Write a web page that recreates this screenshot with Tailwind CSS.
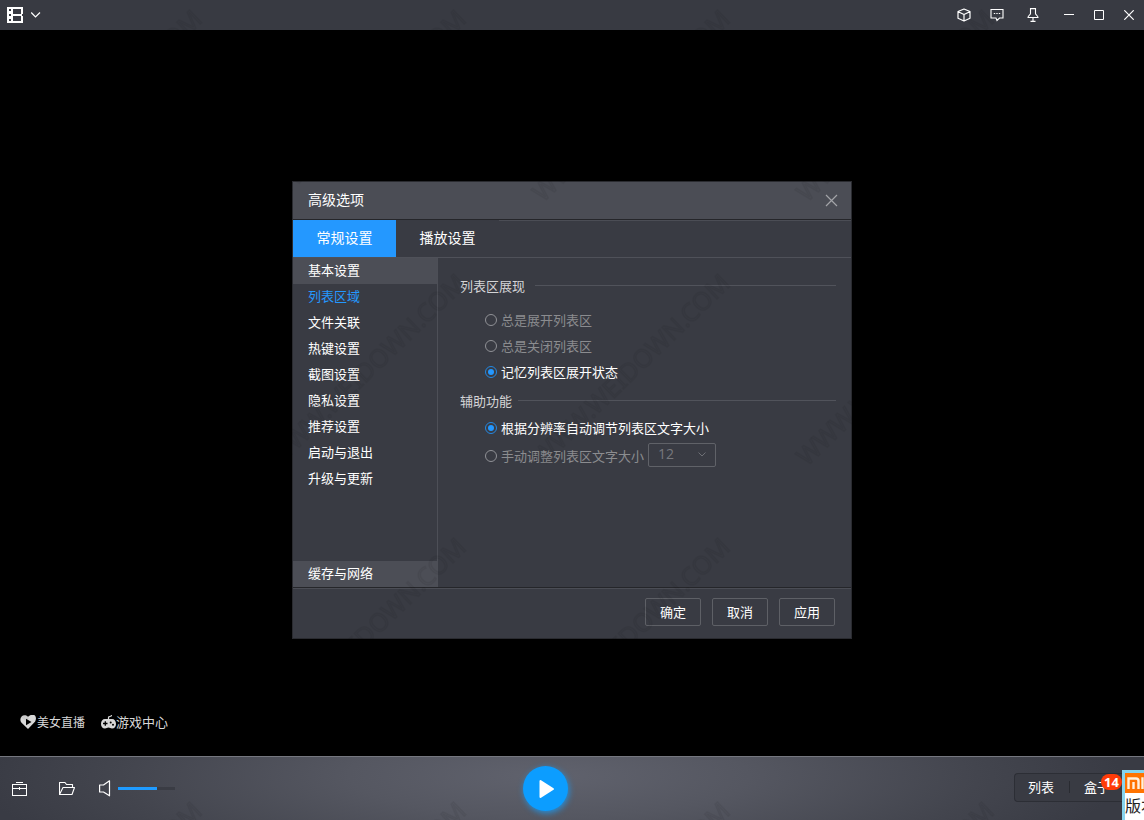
<!DOCTYPE html>
<html lang="zh-CN">
<head>
<meta charset="utf-8">
<meta name="viewport" content="width=device-width, initial-scale=1">
<title>高级选项</title>
<script src="https://cdn.jsdelivr.net/npm/@tailwindcss/browser@4"></script>
</head>
<body class="relative flex h-screen flex-col overflow-hidden bg-black font-['Noto_Sans_CJK_SC',sans-serif] text-[13px] text-white">

<!-- Title bar -->
<header class="flex h-[30px] shrink-0 items-center justify-between bg-[#383a42]">
  <button class="flex items-center gap-2 pl-[7px]" aria-label="主菜单">
    <svg width="16" height="16" viewBox="0 0 16 16" shape-rendering="crispEdges"><path fill="#fff" fill-rule="evenodd" d="M0 0H16V16H0ZM2 2V4H4V2ZM2 7V9H4V7ZM2 12V14H4V12ZM6 2V7H14V2ZM6 9V14H14V9Z"/><path fill="#383a42" d="M15 7h1v2h-1z"/></svg>
    <svg width="10" height="6" viewBox="0 0 10 6" fill="none" stroke="#fff" stroke-width="1.200"><path d="M.2 .5 4.500 5 9 .5"/></svg>
  </button>
  <div class="flex h-full items-center">
    <button class="flex w-[33px] justify-center" aria-label="皮肤"><svg width="14" height="14" viewBox="0 0 14 14" fill="none" stroke="#fff" stroke-width="1.200" stroke-linejoin="round"><path d="M7 1 13 3.500V10.200L7 13 1 10.200V3.500ZM1.200 3.800 7 6.500 12.800 3.800M7 6.500V13"/></svg></button>
    <button class="flex w-[34px] justify-center" aria-label="反馈"><svg width="14" height="14" viewBox="0 0 14 14" fill="none" stroke="#fff" stroke-width="1.100"><path d="M1 1.500H13V10H9.500L7 12.500 6 10H1Z"/><path d="M3.800 5.500h1.400M6.300 5.500h1.400M8.800 5.500h1.400"/></svg></button>
    <button class="mr-[2px] flex w-[38px] justify-center" aria-label="置顶"><svg width="12" height="14" viewBox="0 0 12 14" fill="none" stroke="#fff" stroke-width="1.100"><path d="M3.500 .6H8.500V5.500C8.500 7 11 7.400 11 9.500H1C1 7.400 3.500 7 3.500 5.500ZM6 9.500V13M3.500 13.400H8.500"/></svg></button>
    <button class="flex w-[30px] justify-center" aria-label="最小化"><svg width="10" height="10" viewBox="0 0 10 10"><path fill="#fff" d="M0 4h10v1H0z"/></svg></button>
    <button class="flex w-[30px] justify-center" aria-label="最大化"><svg width="10" height="10" viewBox="0 0 10 10" fill="none" stroke="#fff"><path d="M.5 .5h9v9h-9z"/></svg></button>
    <button class="flex w-[30px] justify-center" aria-label="关闭"><svg width="10" height="10" viewBox="0 0 10 10" stroke="#fff" stroke-width="1.200"><path d="M.3 .3 9.700 9.700M9.700 .3 .3 9.700"/></svg></button>
  </div>
</header>

<!-- Video area -->
<main class="flex min-h-0 flex-1 items-end px-5 pb-[25px] leading-[18px] text-[#d8d8d8]">
  <a href="#" class="flex items-center text-[12px]">
    <svg width="17" height="14" viewBox="0 0 17 14"><path fill="#d8d8d8" d="M8 14 1.300 7.500C-1.800 3 3.500-2.500 8 1.800 12.500-2.500 18-.0 15.200 6.500Z"/><path fill="#000" d="M6 3.800 11.500 7 6 10.300Z"/></svg>
    美女直播
  </a>
  <a href="#" class="ml-4 flex items-center">
    <svg width="15" height="14" viewBox="0 0 15 14"><path fill="none" stroke="#d8d8d8" stroke-width="1.200" d="M7.500 5V2.500Q7.500 1.500 9 1.500 10.500 1.500 10.500 0"/><path fill="#d8d8d8" d="M4 4H11C13.500 4 15 6 15 9 15 11.500 13.500 13.500 11 13.500 9.500 13.500 9 12.500 7.500 12.500S5.500 13.500 4 13.500C1.500 13.500 0 11.500 0 9 0 6 1.500 4 4 4Z"/><path stroke="#000" stroke-width="1.300" d="M2 8.500H6.500M4.300 6.300V10.700"/><circle cx="9.700" cy="7.500" r="1"/><circle cx="12" cy="9.800" r="1"/></svg>
    游戏中心
  </a>
</main>

<!-- Playback bar -->
<footer class="relative grid h-16 shrink-0 grid-cols-[523fr_45px_576fr] items-center overflow-hidden border-t border-[#75777f] bg-[#393b44] bg-[radial-gradient(ellipse_50%_190%_at_48%_30%,#60626d_0%,#555761_35%,#43454e_75%,#393b44_100%)]">
  <div class="flex items-center pl-3">
    <button aria-label="工具箱"><svg width="16" height="16" viewBox="0 0 16 16" fill="none" stroke="#fff" shape-rendering="crispEdges"><path d="M4 1.500H11M.5 3.500H14.500V14.500H.5ZM.5 7.500H14.500M7.500 6V9"/></svg></button>
    <button class="ml-[31px]" aria-label="打开文件"><svg width="16" height="16" viewBox="0 0 16 16" fill="none" stroke="#fff" stroke-width="1.100"><path d="M.5 13.500V1.500H6L7.500 3.500H13.500V6M.5 13.500 4 6.500H15.500L13 13.500Z" stroke-linejoin="round"/></svg></button>
    <button class="ml-6" aria-label="静音"><svg width="12" height="17" viewBox="0 0 12 17" fill="none" stroke="#fff" stroke-width="1.200"><path d="M.6 5H4.500L10.500 .8V15.800L4.500 12H.6Z" stroke-linejoin="round"/></svg></button>
    <div class="ml-[7px] h-[3px] w-[57px] bg-[#3a3c44]" role="slider" aria-label="音量" aria-valuenow="68"><div class="h-full bg-[#1f9bff]" style="width:68%"></div></div>
  </div>
  <button class="grid size-[45px] place-items-center rounded-full bg-[#0c9dff] shadow-[1px_2px_6px_#2491de]" aria-label="播放"><svg width="16" height="20" viewBox="0 0 16 20" class="ml-[3px]"><path fill="#fff" stroke="#fff" stroke-width="2" stroke-linejoin="round" d="M1.500 2V18L14 10Z"/></svg></button>
  <div class="flex justify-end pb-[2px]">
    <div class="flex h-[29px] w-[130px] items-center rounded-l-sm border border-r-0 border-[#2c2e35] bg-[#393b43] pb-[2px]">
      <button class="w-[54px] pr-[2px] leading-5">列表</button>
      <span class="h-3 w-px bg-[#292b31]"></span>
      <button class="w-[54px] leading-5">盒子</button>
    </div>
  </div>
  <span class="absolute top-[17px] right-[22px] w-[21px] rounded-full bg-[#ff3b08] text-center font-['Noto_Sans',sans-serif] text-[13px] leading-4 font-bold">14</span>
</footer>

<!-- Corner popup -->
<aside class="absolute right-0 bottom-0 z-10 h-[50px] w-[22px] overflow-hidden border-t-3 border-l-3 border-[#87d4ed] bg-white">
  <div class="h-5 bg-[#ff7300] pt-1 pl-[2px]">
    <svg width="20" height="12" viewBox="0 0 20 12" fill="none" stroke="#fff0dc" stroke-width="2.400"><path d="M1.500 12V1.500H9Q11.500 1.500 11.500 4V12M6.500 5V12M15.500 .3V12"/></svg>
  </div>
  <p class="pt-[2px] text-[16px] leading-5 whitespace-nowrap text-[#222]">版本</p>
</aside>

<!-- Options dialog -->
<div class="absolute inset-0 grid place-items-center">
<section class="flex min-h-[458px] w-[560px] flex-col border border-[#2a2b30] bg-[#393b43]" role="dialog" aria-label="高级选项">
  <div class="flex h-[38px] items-center justify-between border-b border-[#25262a] bg-[#4b4d55] pr-[13px] pl-[15px]">
    <h1 class="pb-[3px] text-[14px] leading-5">高级选项</h1>
    <button aria-label="关闭对话框"><svg width="13" height="13" viewBox="0 0 13 13" stroke="#a3a4a8" stroke-width="1.200"><path d="M1 1 12 12M12 1 1 12"/></svg></button>
  </div>
  <nav class="flex h-[38px] border-b border-[#4f5159] text-[14px]">
    <button class="w-[103px] bg-[#2498ff] pb-[2px]">常规设置</button>
    <button class="w-[103px] pb-[2px]">播放设置</button>
    <span class="flex-1 border-t border-[#4b4d55]"></span>
  </nav>
  <div class="flex flex-1">
    <nav class="flex w-[145px] flex-col border-r border-[#4d4f57] leading-6">
      <a href="#" class="bg-[#4c4e56] pb-[2px] pl-[15px]">基本设置</a>
      <a href="#" class="pb-[2px] pl-[15px] text-[#2498ff]">列表区域</a>
      <a href="#" class="pb-[2px] pl-[15px]">文件关联</a>
      <a href="#" class="pb-[2px] pl-[15px]">热键设置</a>
      <a href="#" class="pb-[2px] pl-[15px]">截图设置</a>
      <a href="#" class="pb-[2px] pl-[15px]">隐私设置</a>
      <a href="#" class="pb-[2px] pl-[15px]">推荐设置</a>
      <a href="#" class="pb-[2px] pl-[15px]">启动与退出</a>
      <a href="#" class="pb-[2px] pl-[15px]">升级与更新</a>
      <a href="#" class="mt-auto bg-[#4c4e56] pb-[2px] pl-[15px]">缓存与网络</a>
    </nav>
    <form class="flex-1 pt-[17px] pr-[15px] pl-[22px] leading-[22px]">
      <div role="radiogroup" aria-labelledby="g1">
        <div class="flex items-center gap-[10px] text-[#d4d4d6]"><h2 id="g1">列表区展现</h2><span class="mb-px h-px flex-1 bg-[#51535b]"></span></div>
        <div class="mt-3 flex flex-col gap-1 pl-[25px] text-[#8b8c8f]">
          <label class="flex items-center gap-1"><input type="radio" name="list" class="size-3 appearance-none rounded-full border border-[#909196]">总是展开列表区</label>
          <label class="flex items-center gap-1"><input type="radio" name="list" class="size-3 appearance-none rounded-full border border-[#909196]">总是关闭列表区</label>
          <label class="flex items-center gap-1 text-white"><input type="radio" name="list" checked class="grid size-3 appearance-none place-items-center rounded-full border border-[#2388e2] before:size-[6px] before:rounded-full before:bg-[#2498ff]">记忆列表区展开状态</label>
        </div>
      </div>
      <div role="radiogroup" aria-labelledby="g2" class="mt-[7px]">
        <div class="flex items-center gap-[6px] text-[#d4d4d6]"><h2 id="g2">辅助功能</h2><span class="mb-px h-px flex-1 bg-[#51535b]"></span></div>
        <div class="mt-[5px] flex flex-col gap-1 pl-[25px] text-[#8b8c8f]">
          <label class="flex items-center gap-1 text-white"><input type="radio" name="size" checked class="grid size-3 appearance-none place-items-center rounded-full border border-[#2388e2] before:size-[6px] before:rounded-full before:bg-[#2498ff]">根据分辨率自动调节列表区文字大小</label>
          <div class="flex items-center gap-1">
            <label class="flex items-center gap-1 pt-[2px]"><input type="radio" name="size" class="size-3 appearance-none rounded-full border border-[#909196]">手动调整列表区文字大小</label>
            <div class="relative">
              <select disabled aria-label="文字大小" class="block h-6 w-[68px] appearance-none rounded-xs border border-[#606268] px-[9px] pb-[2px] font-['Open_Sans',sans-serif] text-[14px] leading-5 text-[#77787d] opacity-100"><option>12</option></select>
              <svg class="absolute top-[9px] right-[10px]" width="8" height="5" viewBox="0 0 8 5" fill="none" stroke="#6d6f75"><path d="M.5 .5 4 4 7.500 .5"/></svg>
            </div>
          </div>
        </div>
      </div>
    </form>
  </div>
  <div class="border-t border-[#25262a]">
    <div class="flex h-[50px] items-center justify-end gap-[11px] border-t border-[#4b4d55] pr-4 pb-[3px]">
      <button class="h-7 w-14 rounded-xs border border-[#5e6066]">确定</button>
      <button class="h-7 w-14 rounded-xs border border-[#5e6066]">取消</button>
      <button class="h-7 w-14 rounded-xs border border-[#5e6066]">应用</button>
    </div>
  </div>
</section>
</div>

<!-- Tiled watermark -->
<svg class="pointer-events-none absolute inset-0 size-full" aria-hidden="true">
  <defs><pattern id="wm" width="264" height="264" patternUnits="userSpaceOnUse" patternTransform="translate(-25 -37)">
    <text transform="translate(40 240) rotate(-44)" font-family="Noto Sans" font-size="25" fill="#000" fill-opacity=".025" stroke="#000" stroke-opacity=".05" stroke-width="1.500">WWW.WEIDOWN.COM</text>
  </pattern></defs>
  <rect width="100%" height="100%" fill="url(#wm)"/>
</svg>
</body>
</html>
